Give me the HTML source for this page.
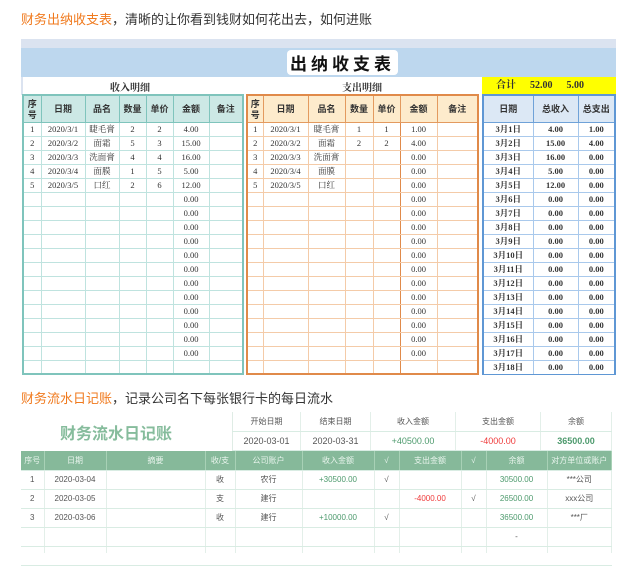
<!DOCTYPE html>
<html><head><meta charset="utf-8"><style>
*{margin:0;padding:0;box-sizing:border-box}
body{width:640px;height:565px;background:#fff;position:relative;overflow:hidden;font-family:"Liberation Sans","Noto Sans CJK SC",sans-serif}
.a{position:absolute}
.cap{font-size:13px;color:#333;white-space:nowrap}
.cap b{font-weight:normal;color:#f07a1e}
table{border-collapse:collapse;table-layout:fixed;position:absolute}
td{text-align:center;white-space:nowrap;overflow:hidden;padding:0}
.t td{height:14px;font-size:8.5px;font-family:"Liberation Serif","Noto Serif CJK SC",serif;color:#333;line-height:13px}
.t tr.h td{height:27px;font-size:9px;font-weight:bold;font-family:"Noto Sans CJK SC",sans-serif;color:#333;line-height:11px}
.inc td{border:1px solid #bfe3df}
.inc tr.h td{background:#cce8e5;border:1px solid #7fc4bc}
.inc{border:2px solid #7fc4bc}
.exp td{border:1px solid #f4cba8}
.exp td.k{border-left:1.5px solid #e08a4a;border-right:1.5px solid #e08a4a}
.exp tr.h td{background:#fdebcc;border:1px solid #e39a5f}
.exp{border:2px solid #e08a4a}
.sum td{border:1px solid #a9c9ec;font-weight:bold}
.sum tr.h td{background:#dce8f5;border:1px solid #6fa2d8}
.sum{border:2px solid #5f97d4}
.b td{font-size:8px;color:#555;height:19px;border-bottom:1px solid #d9ece3;border-right:1px solid #e3efe9}
.b tr.h td{background:#86b99a;color:#eaf5ee;border-right:1px solid #a8d1b6}
.b td.g{color:#4d9a6d}.b td.r{color:#ef3b3b}
</style></head><body>
<div class="a cap" style="left:21px;top:9px"><b>财务出纳收支表</b>，清晰的让你看到钱财如何花出去，如何进账</div>

<div class="a" style="left:21px;top:39px;width:595px;height:10px;background:#dbe3f0"></div>
<div class="a" style="left:21px;top:48px;width:595px;height:29px;background:#bdd7ee"></div>
<div class="a" style="left:287px;top:50px;width:111px;height:25px;background:#fff;border-radius:4px;font-size:17px;font-weight:bold;text-align:center;line-height:25px;letter-spacing:4px;font-family:'Noto Sans CJK SC',sans-serif;color:#111">出纳收支表</div>
<div class="a" style="left:21px;top:77px;width:2px;height:18px;background:#dbe3f0"></div>
<div class="a" style="left:110px;top:79px;font-size:10px;font-weight:bold;color:#333;font-family:'Noto Serif CJK SC',serif">收入明细</div>
<div class="a" style="left:342px;top:79px;font-size:10px;font-weight:bold;color:#333;font-family:'Noto Serif CJK SC',serif">支出明细</div>
<div class="a" style="left:482px;top:77px;width:134px;height:17px;background:#ffff00;font-size:10px;font-weight:bold;font-family:'Liberation Serif','Noto Serif CJK SC',serif;line-height:17px;color:#333"><span style="margin-left:14px">合计</span><span style="margin-left:14px">52.00</span><span style="margin-left:14px">5.00</span></div>

<table class="t inc" style="left:22px;top:94px;width:222px">
<colgroup><col style="width:18px"><col style="width:44px"><col style="width:34px"><col style="width:27px"><col style="width:27px"><col style="width:36px"><col></colgroup>
<tr class="h"><td>序<br>号</td><td>日期</td><td>品名</td><td>数量</td><td>单价</td><td>金额</td><td>备注</td></tr>
<tr><td>1</td><td>2020/3/1</td><td>睫毛膏</td><td>2</td><td>2</td><td>4.00</td><td></td></tr>
<tr><td>2</td><td>2020/3/2</td><td>面霜</td><td>5</td><td>3</td><td>15.00</td><td></td></tr>
<tr><td>3</td><td>2020/3/3</td><td>洗面膏</td><td>4</td><td>4</td><td>16.00</td><td></td></tr>
<tr><td>4</td><td>2020/3/4</td><td>面膜</td><td>1</td><td>5</td><td>5.00</td><td></td></tr>
<tr><td>5</td><td>2020/3/5</td><td>口红</td><td>2</td><td>6</td><td>12.00</td><td></td></tr>
<tr><td></td><td></td><td></td><td></td><td></td><td>0.00</td><td></td></tr>
<tr><td></td><td></td><td></td><td></td><td></td><td>0.00</td><td></td></tr>
<tr><td></td><td></td><td></td><td></td><td></td><td>0.00</td><td></td></tr>
<tr><td></td><td></td><td></td><td></td><td></td><td>0.00</td><td></td></tr>
<tr><td></td><td></td><td></td><td></td><td></td><td>0.00</td><td></td></tr>
<tr><td></td><td></td><td></td><td></td><td></td><td>0.00</td><td></td></tr>
<tr><td></td><td></td><td></td><td></td><td></td><td>0.00</td><td></td></tr>
<tr><td></td><td></td><td></td><td></td><td></td><td>0.00</td><td></td></tr>
<tr><td></td><td></td><td></td><td></td><td></td><td>0.00</td><td></td></tr>
<tr><td></td><td></td><td></td><td></td><td></td><td>0.00</td><td></td></tr>
<tr><td></td><td></td><td></td><td></td><td></td><td>0.00</td><td></td></tr>
<tr><td></td><td></td><td></td><td></td><td></td><td>0.00</td><td></td></tr>
<tr><td></td><td></td><td></td><td></td><td></td><td></td><td></td></tr>
</table>

<table class="t exp" style="left:246px;top:94px;width:233px">
<colgroup><col style="width:16px"><col style="width:45px"><col style="width:37px"><col style="width:28px"><col style="width:27px"><col style="width:37px"><col></colgroup>
<tr class="h"><td>序<br>号</td><td>日期</td><td>品名</td><td>数量</td><td>单价</td><td>金额</td><td>备注</td></tr>
<tr><td>1</td><td>2020/3/1</td><td>睫毛膏</td><td>1</td><td class="k">1</td><td>1.00</td><td></td></tr>
<tr><td>2</td><td>2020/3/2</td><td>面霜</td><td>2</td><td class="k">2</td><td>4.00</td><td></td></tr>
<tr><td>3</td><td>2020/3/3</td><td>洗面膏</td><td></td><td class="k"></td><td>0.00</td><td></td></tr>
<tr><td>4</td><td>2020/3/4</td><td>面膜</td><td></td><td class="k"></td><td>0.00</td><td></td></tr>
<tr><td>5</td><td>2020/3/5</td><td>口红</td><td></td><td class="k"></td><td>0.00</td><td></td></tr>
<tr><td></td><td></td><td></td><td></td><td class="k"></td><td>0.00</td><td></td></tr>
<tr><td></td><td></td><td></td><td></td><td class="k"></td><td>0.00</td><td></td></tr>
<tr><td></td><td></td><td></td><td></td><td class="k"></td><td>0.00</td><td></td></tr>
<tr><td></td><td></td><td></td><td></td><td class="k"></td><td>0.00</td><td></td></tr>
<tr><td></td><td></td><td></td><td></td><td class="k"></td><td>0.00</td><td></td></tr>
<tr><td></td><td></td><td></td><td></td><td class="k"></td><td>0.00</td><td></td></tr>
<tr><td></td><td></td><td></td><td></td><td class="k"></td><td>0.00</td><td></td></tr>
<tr><td></td><td></td><td></td><td></td><td class="k"></td><td>0.00</td><td></td></tr>
<tr><td></td><td></td><td></td><td></td><td class="k"></td><td>0.00</td><td></td></tr>
<tr><td></td><td></td><td></td><td></td><td class="k"></td><td>0.00</td><td></td></tr>
<tr><td></td><td></td><td></td><td></td><td class="k"></td><td>0.00</td><td></td></tr>
<tr><td></td><td></td><td></td><td></td><td class="k"></td><td>0.00</td><td></td></tr>
<tr><td></td><td></td><td></td><td></td><td class="k"></td><td></td><td></td></tr>
</table>

<table class="t sum" style="left:482px;top:94px;width:134px">
<colgroup><col style="width:50px"><col style="width:45px"><col></colgroup>
<tr class="h"><td>日期</td><td>总收入</td><td>总支出</td></tr>
<tr><td>3月1日</td><td>4.00</td><td>1.00</td></tr>
<tr><td>3月2日</td><td>15.00</td><td>4.00</td></tr>
<tr><td>3月3日</td><td>16.00</td><td>0.00</td></tr>
<tr><td>3月4日</td><td>5.00</td><td>0.00</td></tr>
<tr><td>3月5日</td><td>12.00</td><td>0.00</td></tr>
<tr><td>3月6日</td><td>0.00</td><td>0.00</td></tr>
<tr><td>3月7日</td><td>0.00</td><td>0.00</td></tr>
<tr><td>3月8日</td><td>0.00</td><td>0.00</td></tr>
<tr><td>3月9日</td><td>0.00</td><td>0.00</td></tr>
<tr><td>3月10日</td><td>0.00</td><td>0.00</td></tr>
<tr><td>3月11日</td><td>0.00</td><td>0.00</td></tr>
<tr><td>3月12日</td><td>0.00</td><td>0.00</td></tr>
<tr><td>3月13日</td><td>0.00</td><td>0.00</td></tr>
<tr><td>3月14日</td><td>0.00</td><td>0.00</td></tr>
<tr><td>3月15日</td><td>0.00</td><td>0.00</td></tr>
<tr><td>3月16日</td><td>0.00</td><td>0.00</td></tr>
<tr><td>3月17日</td><td>0.00</td><td>0.00</td></tr>
<tr><td>3月18日</td><td>0.00</td><td>0.00</td></tr>
</table>
<div class="a" style="left:0;top:375px;width:640px;height:190px;background:#fff"></div>

<div class="a cap" style="left:21px;top:388px"><b>财务流水日记账</b>，记录公司名下每张银行卡的每日流水</div>
<div class="a" style="left:60px;top:420px;font-size:16px;font-weight:bold;color:#86bc9c;font-family:'Noto Sans CJK SC',sans-serif">财务流水日记账</div>
<table class="b" style="left:232px;top:412px;width:380px;border-left:1px solid #dfece5">
<colgroup><col style="width:68px"><col style="width:70px"><col style="width:85px"><col style="width:85px"><col></colgroup>
<tr><td>开始日期</td><td>结束日期</td><td>收入金额</td><td>支出金额</td><td>余额</td></tr>
<tr><td style="font-size:9px">2020-03-01</td><td style="font-size:9px">2020-03-31</td><td class="g" style="font-size:9px">+40500.00</td><td class="r" style="font-size:9px">-4000.00</td><td class="g" style="font-size:9px;font-weight:bold">36500.00</td></tr>
</table>
<table class="b" style="left:21px;top:451px;width:591px">
<colgroup><col style="width:23px"><col style="width:62px"><col style="width:99px"><col style="width:30px"><col style="width:67px"><col style="width:72px"><col style="width:25px"><col style="width:62px"><col style="width:25px"><col style="width:61px"><col></colgroup>
<tr class="h"><td>序号</td><td>日期</td><td>摘要</td><td>收/支</td><td>公司账户</td><td>收入金额</td><td>√</td><td>支出金额</td><td>√</td><td>余额</td><td>对方单位或账户</td></tr>
<tr><td>1</td><td>2020-03-04</td><td></td><td>收</td><td>农行</td><td class="g">+30500.00</td><td>√</td><td></td><td></td><td class="g">30500.00</td><td>***公司</td></tr>
<tr><td>2</td><td>2020-03-05</td><td></td><td>支</td><td>建行</td><td></td><td></td><td class="r">-4000.00</td><td>√</td><td class="g">26500.00</td><td>xxx公司</td></tr>
<tr><td>3</td><td>2020-03-06</td><td></td><td>收</td><td>建行</td><td class="g">+10000.00</td><td>√</td><td></td><td></td><td class="g">36500.00</td><td>***厂</td></tr>
<tr><td></td><td></td><td></td><td></td><td></td><td></td><td></td><td></td><td></td><td>-</td><td></td></tr>
<tr><td></td><td></td><td></td><td></td><td></td><td></td><td></td><td></td><td></td><td></td><td></td></tr>
</table>
<div class="a" style="left:0;top:553px;width:640px;height:12px;background:#fff"></div>
</body></html>
